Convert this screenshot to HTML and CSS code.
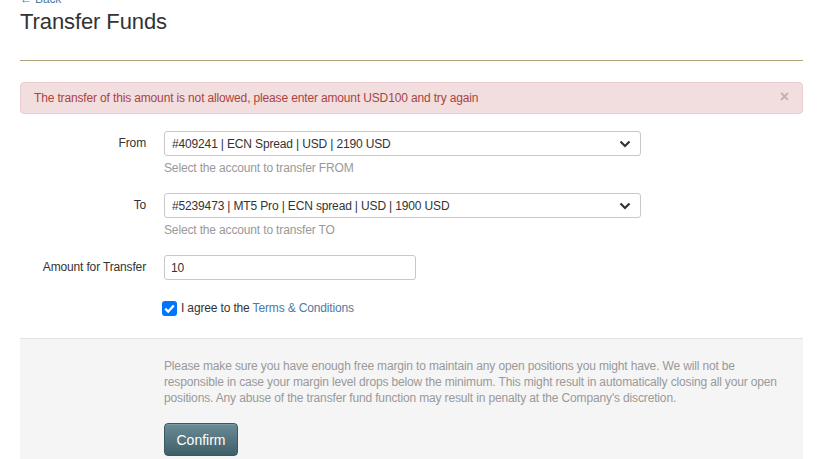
FILE: index.html
```html
<!DOCTYPE html>
<html lang="en">
<head>
<meta charset="utf-8">
<title>Transfer Funds</title>
<link rel="stylesheet" href="styles.css">
</head>
<body>
<div class="page">
  <a class="back" href="#">&larr; Back</a>
  <h1 class="title">Transfer Funds</h1>
  <hr class="rule">
  <div class="alert">
    <span>The transfer of this amount is not allowed, please enter amount USD100 and try again</span>
    <span class="close">&times;</span>
  </div>
  <form class="form">
    <div class="row">
      <label class="label">From</label>
      <div class="field">
        <div class="select wide"><span>#409241 | ECN Spread | USD | 2190 USD</span>
          <svg class="chev" width="12" height="8" viewBox="0 0 12 8"><path d="M1.5 1.5 L6 6 L10.5 1.5" fill="none" stroke="#333" stroke-width="2.2"/></svg>
        </div>
        <div class="help">Select the account to transfer FROM</div>
      </div>
    </div>
    <div class="row">
      <label class="label">To</label>
      <div class="field">
        <div class="select wide"><span>#5239473 | MT5 Pro | ECN spread | USD | 1900 USD</span>
          <svg class="chev" width="12" height="8" viewBox="0 0 12 8"><path d="M1.5 1.5 L6 6 L10.5 1.5" fill="none" stroke="#333" stroke-width="2.2"/></svg>
        </div>
        <div class="help">Select the account to transfer TO</div>
      </div>
    </div>
    <div class="row row-amount">
      <label class="label">Amount for Transfer</label>
      <div class="field">
        <div class="input">10</div>
      </div>
    </div>
    <div class="row row-check">
      <div class="label"></div>
      <div class="field check">
        <span class="box"><svg width="15" height="15" viewBox="0 0 15 15"><path d="M3.2 7.6 L6.2 10.6 L11.8 4.4" fill="none" stroke="#fff" stroke-width="2.2"/></svg></span>
        <span>I agree to the <a href="#" class="link">Terms &amp; Conditions</a></span>
      </div>
    </div>
    <div class="panel">
      <p class="notice">Please make sure you have enough free margin to maintain any open positions you might have. We will not be responsible in case your margin level drops below the minimum. This might result in automatically closing all your open positions. Any abuse of the transfer fund function may result in penalty at the Company's discretion.</p>
      <button type="button" class="btn">Confirm</button>
    </div>
  </form>
</div>
</body>
</html>
```
FILE: styles.css
```css
html, body {
  margin: 0;
  padding: 0;
  background: #fff;
  overflow: hidden;
}
body {
  font-family: "Liberation Sans", Arial, sans-serif;
  font-size: 12px;
  letter-spacing: -0.15px;
  color: #333;
}
.page {
  padding: 0 16px 0 20px;
}
.back {
  display: block;
  margin-top: -9px;
  height: 17px;
  line-height: 17px;
  font-size: 12px;
  color: #4a7ba6;
  text-decoration: none;
}
.title {
  margin: 2px 0 0;
  font-size: 22px;
  line-height: 24px;
  letter-spacing: -0.1px;
  font-weight: normal;
  color: #333;
}
.rule {
  margin: 26px 0 0;
  border: 0;
  border-top: 1px solid #b4a079;
  height: 0;
}
.alert {
  margin-top: 21px;
  height: 30px;
  border: 1px solid #ebccd1;
  background: #f2dede;
  color: #a94442;
  border-radius: 4px;
  display: flex;
  align-items: center;
  justify-content: space-between;
  padding: 0 13px 0 13px;
  font-size: 12px;
}
.close {
  color: #c4aeae;
  font-size: 16px;
  font-weight: bold;
  line-height: 1;
  margin-top: -3px;
}
.form {
  margin: 17px 0 0;
}
.row {
  display: grid;
  grid-template-columns: 126px 1fr;
  column-gap: 18px;
  margin-bottom: 17px;
}
.label {
  text-align: right;
  line-height: 25px;
  font-size: 12px;
  color: #333;
}
.select, .input {
  box-sizing: border-box;
  height: 25px;
  border: 1px solid #c8c8c8;
  border-radius: 3px;
  background: #fff;
  display: flex;
  align-items: center;
  padding: 0 7px;
  font-size: 12px;
  color: #333;
}
.wide {
  width: 477px;
  justify-content: space-between;
}
.chev {
  margin-right: 2px;
}
.input {
  width: 252px;
  padding: 0 6px;
}
.help {
  margin-top: 4px;
  line-height: 16px;
  color: #999;
  font-size: 12px;
}
.row-amount {
  margin-bottom: 18px;
}
.row-check {
  margin-bottom: 20px;
}
.check {
  display: flex;
  align-items: center;
  height: 20px;
  margin-left: -2px;
  color: #333;
}
.box {
  width: 15px;
  height: 15px;
  border-radius: 3px;
  background: #0075ff;
  display: inline-flex;
  margin-right: 4px;
}
.link {
  color: #4a7ba6;
  text-decoration: none;
}
.panel {
  border-top: 1px solid #e3e3e3;
  background: #f5f5f5;
  padding: 19px 13px 8px 144px;
  height: 200px;
}
.notice {
  margin: 0;
  line-height: 16px;
  color: #999;
  font-size: 12px;
}
.btn {
  margin-top: 17px;
  height: 33px;
  width: 74px;
  border: 1px solid #3b5761;
  border-radius: 4px;
  background: linear-gradient(#6a8c96, #3f5f69);
  color: #fff;
  font-family: "Liberation Sans", Arial, sans-serif;
  font-size: 14px;
  letter-spacing: 0;
  padding: 0;
  box-shadow: inset 0 1px 0 rgba(255,255,255,0.15);
}
```
